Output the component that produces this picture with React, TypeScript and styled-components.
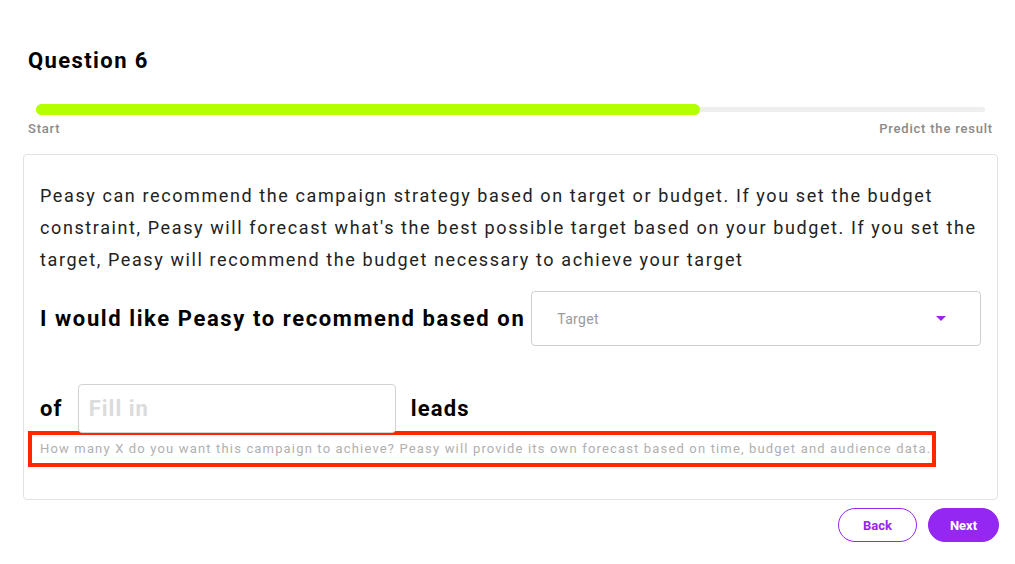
import React, { FC } from 'react';
import styled, { createGlobalStyle } from 'styled-components';

const PURPLE = '#9427f2';
const LIME = '#b4ff00';

const GlobalStyle = createGlobalStyle`
  body {
    margin: 0;
    background: #ffffff;
    font-family: Roboto, 'Liberation Sans', sans-serif;
    color: #111;
  }
`;

const Page = styled.div`
  width: 975px;
  padding: 46px 0 0 23px;
`;

const Header = styled.div`
  padding: 0 5px;
`;

const Title = styled.h1`
  margin: 0;
  font-size: 22px;
  line-height: 30px;
  font-weight: 700;
  letter-spacing: 1.4px;
  color: #000;
`;

const Track = styled.div`
  position: relative;
  margin: 28px 8px 0 8px;
  height: 11px;
  display: flex;
  align-items: center;
`;

const TrackLine = styled.div`
  flex: 1;
  height: 5px;
  border-radius: 3px;
  background: #eeeeee;
`;

const TrackFill = styled.div`
  position: absolute;
  left: 0;
  top: 0;
  height: 11px;
  border-radius: 6px;
  background: ${LIME};
`;

const Labels = styled.div`
  display: flex;
  justify-content: space-between;
  margin-top: 6px;
  font-size: 13px;
  line-height: 16px;
  letter-spacing: 0.8px;
  color: #8a8a8a;
  font-weight: 500;
`;

const Card = styled.div`
  margin-top: 17px;
  border: 1px solid #e2e2e2;
  border-radius: 4px;
  padding: 25px 16px 36px 16px;
`;

const Intro = styled.p`
  margin: 0;
  font-size: 18px;
  line-height: 32px;
  letter-spacing: 1.6px;
  color: #222;
`;

const Row = styled.div<{ $top: number }>`
  display: flex;
  align-items: center;
  margin-top: ${(p) => p.$top}px;
`;

const Label = styled.span<{ $gap?: number; $spacing?: number }>`
  font-size: 22px;
  font-weight: 700;
  letter-spacing: ${(p) => p.$spacing ?? 1.2}px;
  color: #000;
  margin-right: ${(p) => p.$gap ?? 0}px;
  white-space: nowrap;
`;

const Select = styled.div`
  flex: 1;
  height: 55px;
  box-sizing: border-box;
  border: 1px solid #cfcfcf;
  border-radius: 4px;
  display: flex;
  align-items: center;
  justify-content: space-between;
  padding: 0 34px 0 25px;
  font-size: 14px;
  letter-spacing: 0.3px;
  color: #9a9a9a;
`;

const Caret = styled.span`
  width: 0;
  height: 0;
  border-left: 5px solid transparent;
  border-right: 5px solid transparent;
  border-top: 5px solid ${PURPLE};
`;

const Input = styled.input`
  width: 318px;
  height: 49px;
  box-sizing: border-box;
  border: 1px solid #d2d2d2;
  border-radius: 4px;
  padding: 0 10px;
  margin-right: 15px;
  font-family: inherit;
  font-size: 22px;
  font-weight: 700;
  letter-spacing: 1px;
  outline: none;
  &::placeholder {
    color: #dcdcdc;
  }
`;

const Hint = styled.div`
  width: 892px;
  margin: 2px 0 0 -8px;
  padding: 0 0 0 8px;
  height: 28px;
  line-height: 28px;
  box-shadow: 0 0 0 4px #ff2600;
  font-size: 13px;
  letter-spacing: 1.16px;
  color: #b0b0b0;
  white-space: nowrap;
`;

const Actions = styled.div`
  display: flex;
  justify-content: flex-end;
  gap: 11px;
  margin: 8px -1px 0 0;
`;

const Button = styled.button<{ $primary?: boolean }>`
  height: 34px;
  border-radius: 17px;
  border: 1px solid ${PURPLE};
  background: ${(p) => (p.$primary ? PURPLE : '#fff')};
  color: ${(p) => (p.$primary ? '#fff' : PURPLE)};
  font-family: inherit;
  font-size: 13px;
  font-weight: 700;
  padding: 0;
  width: ${(p) => (p.$primary ? 71 : 79)}px;
  cursor: pointer;
`;

const App: FC = () => {
  const progress = 0.7;
  return (
    <Page>
      <GlobalStyle />
      <Header>
        <Title>Question 6</Title>
        <Track>
          <TrackLine />
          <TrackFill style={{ width: `${progress * 100}%` }} />
        </Track>
        <Labels>
          <span>Start</span>
          <span>Predict the result</span>
        </Labels>
      </Header>
      <Card>
        <Intro>
          Peasy can recommend the campaign strategy based on target or budget. If you set the budget
          constraint, Peasy will forecast what's the best possible target based on your budget. If you set the
          target, Peasy will recommend the budget necessary to achieve your target
        </Intro>
        <Row $top={15}>
          <Label $gap={6} $spacing={1.6}>I would like Peasy to recommend based on</Label>
          <Select>
            <span>Target</span>
            <Caret />
          </Select>
        </Row>
        <Row $top={38}>
          <Label $gap={15}>of</Label>
          <Input placeholder="Fill in" />
          <Label>leads</Label>
        </Row>
        <Hint>
          How many X do you want this campaign to achieve? Peasy will provide its own forecast based on time, budget and audience data.
        </Hint>
      </Card>
      <Actions>
        <Button>Back</Button>
        <Button $primary>Next</Button>
      </Actions>
    </Page>
  );
};

export default App;
